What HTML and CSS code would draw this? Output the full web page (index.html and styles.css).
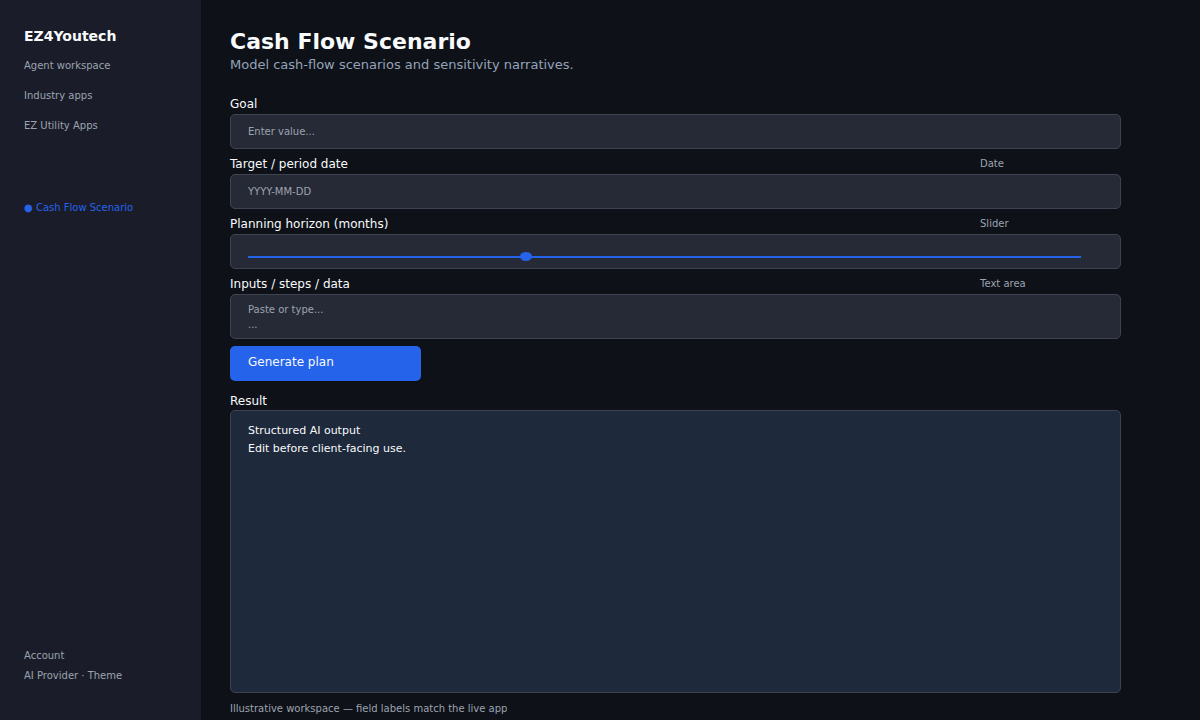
FILE: index.html
```html
<!DOCTYPE html>
<html lang="en">

<head>
    <meta charset="UTF-8">
    <meta name="viewport" content="width=device-width, initial-scale=1.0">
    <title>Cash Flow Scenario</title>
    <link rel="stylesheet" href="styles.css">
</head>

<body>
    <div class="app">
        <aside class="sidebar">
            <div class="brand">EZ4Youtech</div>
            <a class="nav-link" href="#">Agent workspace</a>
            <a class="nav-link" href="#">Industry apps</a>
            <a class="nav-link" href="#">EZ Utility Apps</a>
            <a class="nav-link nav-active" href="#">● Cash Flow Scenario</a>
            <div class="sidebar-foot">
                <a class="foot-link" href="#">Account</a>
                <a class="foot-link" href="#">AI Provider · Theme</a>
            </div>
        </aside>

        <main class="main">
            <h1>Cash Flow Scenario</h1>
            <p class="subtitle">Model cash-flow scenarios and sensitivity narratives.</p>

            <div class="field field-first">
                <div class="field-head"><label>Goal</label></div>
                <div class="box">Enter value...</div>
            </div>
            <div class="field">
                <div class="field-head"><label>Target / period date</label><span class="hint">Date</span></div>
                <div class="box">YYYY-MM-DD</div>
            </div>
            <div class="field">
                <div class="field-head"><label>Planning horizon (months)</label><span class="hint">Slider</span></div>
                <div class="box box-slider">
                    <div class="track"><span class="thumb"></span></div>
                </div>
            </div>
            <div class="field">
                <div class="field-head"><label>Inputs / steps / data</label><span class="hint">Text area</span></div>
                <div class="box box-area">
                    <div>Paste or type...</div>
                    <div>...</div>
                </div>
            </div>

            <button class="generate">Generate plan</button>

            <div class="field-head result-head"><label>Result</label></div>
            <div class="result">
                <div>Structured AI output</div>
                <div>Edit before client-facing use.</div>
            </div>
            <p class="note">Illustrative workspace — field labels match the live app</p>
        </main>
    </div>
</body>

</html>
```
FILE: styles.css
```css
* {
    box-sizing: border-box;
}

body {
    margin: 0;
    background-color: #0e1118;
    font-family: "DejaVu Sans", sans-serif;
    color: #f8fafc;
    overflow: hidden;
}

.app {
    display: flex;
    height: 720px;
}

.sidebar {
    display: flex;
    flex-direction: column;
    width: 201px;
    padding: 28px 24px 38px;
    background-color: #1a1d29;
}

.brand {
    font-size: 14px;
    font-weight: bold;
    line-height: 16px;
    margin-bottom: 16px;
}

.nav-link {
    font-size: 10px;
    line-height: 12px;
    color: #9ca3af;
    text-decoration: none;
    margin-bottom: 18px;
}

.nav-active {
    color: #2563eb;
    margin-top: 52px;
}

.sidebar-foot {
    display: flex;
    flex-direction: column;
    gap: 8px;
    margin-top: auto;
}

.foot-link {
    font-size: 10px;
    line-height: 12px;
    color: #9ca3af;
    text-decoration: none;
}

.main {
    width: 999px;
    padding: 29px 0 0 29px;
}

h1 {
    margin: 0;
    font-size: 22px;
    line-height: 26px;
    font-weight: bold;
}

.subtitle {
    margin: 2px 0 0;
    font-size: 13px;
    line-height: 16px;
    color: #94a3b8;
}

.field {
    margin-top: 7px;
}

.field-first {
    margin-top: 23px;
}

.field-head {
    display: grid;
    grid-template-columns: 750px 1fr;
    align-items: start;
    height: 14px;
    margin-bottom: 4px;
}

.field-head label {
    font-size: 12px;
    line-height: 16px;
    color: #f8fafc;
}

.hint {
    font-size: 10px;
    line-height: 12px;
    margin-top: 2px;
    color: #9ca3af;
}

.box {
    width: 891px;
    height: 35px;
    padding: 0 17px;
    background-color: #262a36;
    border: 1px solid #3d4350;
    border-radius: 5px;
    font-size: 10px;
    line-height: 34px;
    color: #9ca3af;
}

.box-slider {
    padding-top: 21px;
}

.track {
    position: relative;
    width: 833px;
    height: 2px;
    background-color: #2563eb;
}

.thumb {
    position: absolute;
    left: 272px;
    top: -4px;
    width: 12px;
    height: 9px;
    border-radius: 50%;
    background-color: #2563eb;
}

.box-area {
    height: 45px;
    padding-top: 7px;
    line-height: 15px;
}

.generate {
    display: block;
    width: 191px;
    height: 35px;
    margin-top: 7px;
    padding: 0 0 4px 18px;
    border: none;
    border-radius: 5px;
    background-color: #2563eb;
    color: #f8fafc;
    font-family: inherit;
    font-size: 12px;
    text-align: left;
}

.result-head {
    margin-top: 12px;
    margin-bottom: 3px;
}

.result {
    width: 891px;
    height: 283px;
    padding: 11px 17px;
    background-color: #1e293b;
    border: 1px solid #3d4350;
    border-radius: 5px;
    font-size: 11px;
    line-height: 18px;
    color: #f8fafc;
}

.note {
    margin: 10px 0 0;
    font-size: 10px;
    line-height: 12px;
    color: #9ca3af;
}
```
